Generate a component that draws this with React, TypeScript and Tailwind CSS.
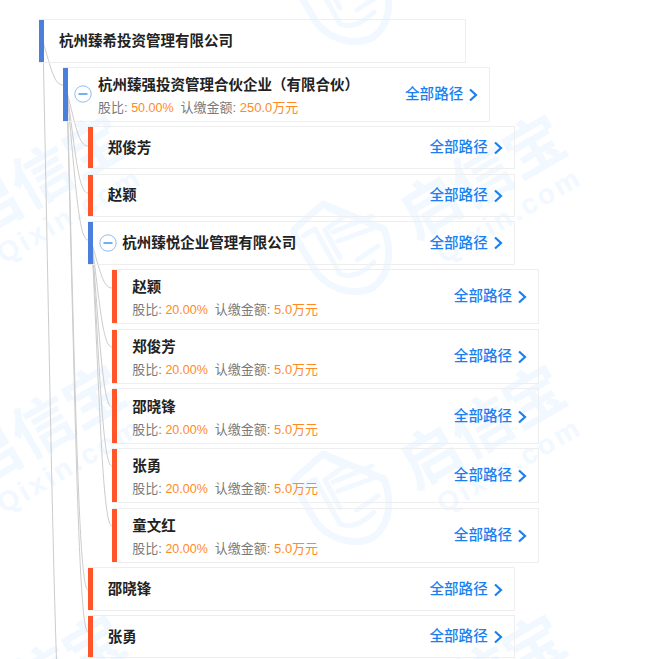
import React from 'react';

const FONT = "font-['Liberation_Sans','Noto_Sans_CJK_SC',sans-serif]";

interface TreeNode {
  name: string;
  detail?: { ratio: string; amount: string };
  expanded?: boolean;
  rowClass?: string;
  children?: TreeNode[];
}

const person = (name: string): TreeNode => ({
  name,
  detail: { ratio: '20.00%', amount: '5.0万元' },
  rowClass: 'h-[55.3px]',
});

const tree: TreeNode = {
  name: '杭州臻希投资管理有限公司',
  rowClass: 'h-[44.4px]',
  children: [
    {
      name: '杭州臻强投资管理合伙企业（有限合伙）',
      detail: { ratio: '50.00%', amount: '250.0万元' },
      expanded: true,
      rowClass: 'h-[54.3px]',
      children: [
        { name: '郑俊芳' },
        { name: '赵颖' },
        {
          name: '杭州臻悦企业管理有限公司',
          expanded: true,
          children: ['赵颖', '郑俊芳', '邵晓锋', '张勇', '童文红'].map(person),
        },
        { name: '邵晓锋' },
        { name: '张勇' },
      ],
    },
  ],
};

// parent x, parent y, child x, child y
const links = [
  [43, 42, 63, 85],
  [43, 42, 66, 780],
  [67, 92, 88, 146],
  [67, 92, 88, 193],
  [67, 92, 88, 240],
  [67, 92, 88, 590],
  [67, 92, 88, 632],
  [92, 244, 112, 288],
  [92, 244, 112, 347],
  [92, 244, 112, 407],
  [92, 244, 112, 466],
  [92, 244, 112, 526],
];

const Connectors = () => (
  <svg className="absolute left-0 top-0" width="647" height="659" fill="none" stroke="#cccccc" strokeWidth="1">
    {links.map(([px, py, tx, ty], i) => {
      const dx = tx - px;
      const dy = ty - py;
      return (
        <path key={i} d={`M${px} ${py} C${px + dx * 0.4} ${py + dy * 0.6} ${px + dx * 0.55} ${ty} ${tx} ${ty}`} />
      );
    })}
  </svg>
);

const Logo = ({ className }: { className: string }) => (
  <svg className={`absolute ${className}`} width="120" height="110" viewBox="0 0 120 110" fill="none" stroke="#f1f8ff" strokeLinejoin="round" strokeLinecap="round">
    <path strokeWidth="7" d="M33 4 L94 29 C102 50 101 75 82 88 C62 97 38 88 26 72 L5 36 C3 32 4 29 7 27 Z" />
    <path strokeWidth="5" d="M13 36 L25 29 L50 74 C60 78 72 74 84 62" />
    <path strokeWidth="5" d="M43 32 L82 16" />
    <path strokeWidth="5" d="M48 41 L87 27" />
    <path strokeWidth="5" d="M67 60 L88 46" />
    <path strokeWidth="5" d="M39 9 L55 16 L35 30 L50 58" />
  </svg>
);

const Mark = ({ className }: { className: string }) => (
  <div className={`absolute -translate-x-1/2 -translate-y-1/2 -rotate-[30deg] whitespace-nowrap text-center text-[#f1f8ff] ${className}`}>
    <div className="text-[60px] font-bold leading-[64px]">启信宝</div>
    <div className="ml-[8px] text-[28px] font-bold leading-[28px] tracking-[3px]">Qixin.com</div>
  </div>
);

const Watermark = () => (
  <>
    <Logo className="left-[290px] top-[-50px]" />
    <Logo className="left-[290px] top-[200px]" />
    <Logo className="left-[290px] top-[450px]" />
    <Mark className="left-[490px] top-[190px]" />
    <Mark className="left-[490px] top-[440px]" />
    <Mark className="left-[490px] top-[690px]" />
    <Mark className="left-[50px] top-[190px]" />
    <Mark className="left-[50px] top-[440px]" />
    <Mark className="left-[50px] top-[690px]" />
  </>
);

const CollapseIcon = () => (
  <svg className="absolute left-[11px] top-1/2 -translate-y-1/2" width="18" height="18" viewBox="0 0 18 18" fill="none">
    <circle cx="9" cy="9" r="8.2" stroke="#8fbdf5" strokeWidth="1" />
    <path d="M4.5 9 H13.5" stroke="#3d8bf0" strokeWidth="1.4" />
  </svg>
);

const Row = ({ node }: { node: TreeNode }) => {
  const isCompany = node.expanded || !!node.children;
  return (
    <div
      className={`relative flex w-[427px] items-center justify-between border border-l-0 border-[#eeeeee] ${
        node.rowClass ?? 'h-[43.3px]'
      }`}
    >
      <div className={`absolute bottom-0 left-0 top-0 w-[5px] ${isCompany ? 'bg-[#4a7fdc]' : 'bg-[#ff5529]'}`} />
      {node.expanded && <CollapseIcon />}
      <div className={`${node.expanded ? 'pl-[34.5px]' : 'pl-[20px]'} ${node.detail ? 'pt-[3px]' : ''}`}>
        <div className="text-[14.5px] font-semibold leading-[20px] text-[#222222]">{node.name}</div>
        {node.detail && (
          <div className="mt-[4px] text-[13px] leading-[18px] text-[#7a7a7a]">
            股比: <span className="text-[12.5px] text-[#ff8a24]">{node.detail.ratio}</span>
            <span className="ml-[7px]">认缴金额: </span>
            <span className="text-[#ff8a24]">{node.detail.amount}</span>
          </div>
        )}
      </div>
      {node !== tree && (
        <div className="flex items-center gap-[4px] pr-[10px] pt-[1px] text-[14.6px] font-medium text-[#1a7ff0]">
          全部路径
          <svg width="12" height="14" viewBox="0 0 12 14" fill="none" stroke="#1a7ff0" strokeWidth="2.2">
            <path d="M3 1.5 L9 7 L3 12.5" />
          </svg>
        </div>
      )}
    </div>
  );
};

const Branch = ({ node }: { node: TreeNode }) => (
  <div className="flex flex-col gap-[4.4px]">
    <Row node={node} />
    {node.children && (
      <div className="ml-[24.4px] flex flex-col gap-[4.4px]">
        {node.children.map((child, i) => (
          <Branch key={i} node={child} />
        ))}
      </div>
    )}
  </div>
);

export default function App() {
  return (
    <div className={`relative h-[659px] w-[647px] overflow-hidden bg-white ${FONT}`}>
      <Watermark />
      <Connectors />
      <div className="relative pl-[39px] pt-[18.5px]">
        <Branch node={tree} />
      </div>
    </div>
  );
}
